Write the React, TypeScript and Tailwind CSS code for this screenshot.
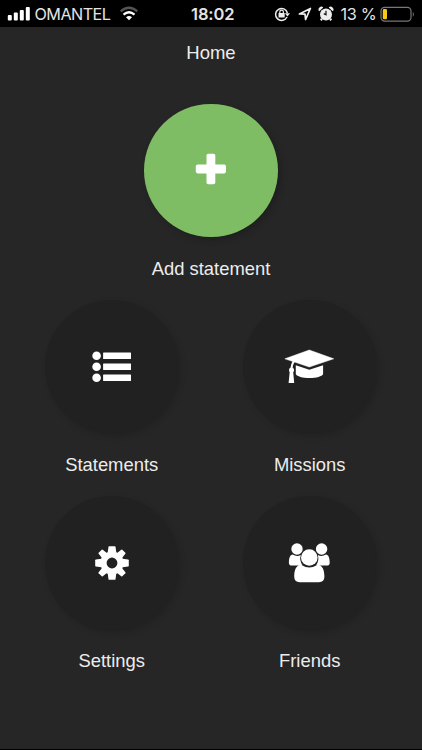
import type { ReactNode } from "react";

const PlusIcon = () => (
  <svg className="size-[60px]" viewBox="-30 -30 60 60" fill="#fff">
    <rect x="-15.2" y="-5.4" width="30.2" height="8.8" rx="1.8" />
    <rect x="-4.5" y="-16.2" width="8.8" height="30.4" rx="1.8" />
  </svg>
);

const ListIcon = () => (
  <svg className="size-[60px]" viewBox="-30 -30 60 60" fill="#fff">
    {[-11.2, -0.2, 10.8].map((y) => (
      <g key={y}>
        <circle cx="-15.4" cy={y} r="4.3" />
        <rect x="-8.900" y={y - 3.2} width="27.9" height="6.4" rx="0.5" />
      </g>
    ))}
  </svg>
);

const CapIcon = () => (
  <svg className="size-[60px]" viewBox="-30 -30 60 60" fill="#fff">
    <path d="M-25.100-8.200L-.700-17L23.700-8.200L-.700 0Z" stroke="#fff" strokeWidth=".500" strokeLinejoin="round" />
    <path d="M-14.200-1.800L-.700 2.800L13.100-1.800V7C12 9.500 6.500 11-.500 11S-13 9.500-14.200 7Z" />
    <path d="M-15.500-6.500C-17.800-4-18.500-1-18.500 3" fill="none" stroke="#fff" strokeWidth="2" />
    <circle cx="-18.500" cy="3" r="2.500" />
    <path d="M-20.200 4L-21.400 16H-15.800L-16.900 4Z" />
  </svg>
);

const GearIcon = () => (
  <svg className="size-[60px]" viewBox="-30 -30 60 60" fill="#fff">
    <circle r="8.500" fill="none" stroke="#fff" strokeWidth="6.200" />
    {[0, 90, 180, 270].map((angle) => (
      <path
        key={angle}
        d="M-4.300-10.500L-3.500-16.200Q-3.400-16.800-2.800-16.800H2.800Q3.400-16.800 3.500-16.200L4.300-10.500Z"
        transform={`rotate(${angle})`}
      />
    ))}
    {[45, 135, 225, 315].map((angle) => (
      <path
        key={angle}
        d="M-3.600-10L-2.900-16Q-2.800-16.700-2.200-16.700H2.200Q2.800-16.700 2.900-16L3.600-10Z"
        transform={`rotate(${angle})`}
      />
    ))}
  </svg>
);

const FriendsIcon = () => (
  <svg className="size-[60px]" viewBox="-30 -30 60 60" fill="#fff">
    <circle cx="-13" cy="-14" r="5.700" />
    <circle cx="11.600" cy="-14" r="5.700" />
    <path d="M-17.400-8.400Q-13-6-9.200-8Q-10.900-2.500-7.600 1.800Q-9.400 2-10.600 2.500H-18.400Q-21.100 2.500-21.100-.3C-21.100-5-19.700-8.300-17.400-8.400Z" />
    <path d="M16-8.400Q11.600-6 7.800-8Q9.500-2.500 6.200 1.800Q8 2 9.200 2.500H17Q19.700 2.500 19.700-.3C19.700-5 18.300-8.300 16-8.400Z" />
    <circle cx="-.700" cy="-5.500" r="8.300" />
    <path d="M-9 1.700Q-.700 7.100 7.600 1.700C12.400 2 14.400 7 14.400 13.500Q14.400 19.200 8.900 19.200H-10.300Q-15.800 19.200-15.800 13.500C-15.800 7-13.800 2-9 1.700Z" />
  </svg>
);

type TileProps = { label: string; icon: ReactNode; accent?: boolean };

const Tile = ({ label, icon, accent }: TileProps) => (
  <button className="flex h-[196.300px] w-[198px] flex-col items-center">
    <span
      className={
        accent
          ? "flex size-[133.500px] items-center justify-center rounded-full bg-[#7fbd64] shadow-[3px_3px_7px_rgba(0,0,0,0.2)]"
          : "flex size-[133.500px] items-center justify-center rounded-full bg-[#212121] shadow-[3px_3px_6px_rgba(0,0,0,0.15)]"
      }
    >
      {icon}
    </span>
    <span className="mt-[20.900px] text-[18.400px] leading-[22px] text-[#ededed]">{label}</span>
  </button>
);

const StatusBar = () => (
  <div className="flex h-[27px] items-center bg-black font-['Inter','Roboto',sans-serif] text-[#e4e4e4]">
    <div className="flex w-[191px] items-center pl-[7px]">
      <svg className="h-[15px] w-[24px]" viewBox="0 0 24 15" fill="#fff">
        <rect x=".800" y="9" width="4" height="5.500" rx="1" />
        <rect x="6.800" y="6.500" width="4" height="8" rx="1" />
        <rect x="12.800" y="4" width="4" height="10.500" rx="1" />
        <rect x="18.800" y="1" width="4" height="13.500" rx="1" />
      </svg>
      <span className="ml-[3.500px] w-[78px] pt-[1px] text-[16.200px] leading-5 tracking-[-0.550px] whitespace-nowrap">OMANTEL</span>
      <svg className="ml-[6px] h-[15px] w-[20px]" viewBox="0 0 20 15" fill="none" strokeWidth="2.300">
        <path d="M1.700 5.400Q10-1.800 18.300 5.400" stroke="#555" />
        <path d="M4.500 8.600Q10 3.800 15.500 8.600" stroke="#fff" />
        <path d="M7 11.300Q10 8.700 13 11.300L10 14.200Z" fill="#fff" />
      </svg>
    </div>
    <span className="w-[44px] pt-[1px] text-[16.500px] leading-5 font-semibold tracking-[-0.100px] whitespace-nowrap">18:02</span>
    <svg className="ml-[39px] h-[16px] w-[16px]" viewBox="0 0 16 16" fill="none" stroke="#eee">
      <path d="M13 11A6 6 0 1 1 13.400 7" strokeWidth="1.500" />
      <path d="M10.800 7.200H16L13.500 10.500Z" fill="#eee" stroke="none" />
      <rect x="4.500" y="7" width="6.200" height="4.500" rx=".600" fill="#eee" stroke="none" />
      <path d="M5.800 7.500V6a1.800 1.800 0 0 1 3.600 0v1.500" strokeWidth="1.200" />
    </svg>
    <svg className="ml-[8px] h-[14px] w-[14px]" viewBox="0 0 14 14" fill="none" stroke="#eee" strokeWidth="1.700" strokeLinejoin="round">
      <path d="M1.400 7L12.400 1.500L7.600 12.500L7 7.200Z" />
    </svg>
    <svg className="ml-[6px] h-[16px] w-[16px]" viewBox="0 0 16 16" fill="#eee">
      <circle cx="8" cy="8.400" r="6" />
      <path d="M1.200 5.300A2.800 2.800 0 0 1 5.300 1.500ZM14.800 5.300A2.800 2.800 0 0 0 10.700 1.500ZM3 12L4.800 13.800L3.500 15L2 13.500ZM13 12L11.200 13.800L12.500 15L14 13.500Z" />
      <path d="M8 4.800V8.700L5.800 7.600" fill="none" stroke="#111" strokeWidth="1.200" />
    </svg>
    <span className="ml-[6.500px] w-[38.500px] pt-[1px] text-[16.300px] leading-5 tracking-[-0.300px] whitespace-nowrap">13 %</span>
    <svg className="ml-[.500px] h-[16px] w-[36px]" viewBox="0 0 36 16">
      <rect x="1" y="1.300" width="30" height="13.800" rx="3.600" fill="none" stroke="#777" strokeWidth="1.200" />
      <rect x="2.800" y="3.100" width="4.200" height="10.200" rx="1.300" fill="#f8c817" />
      <path d="M32.800 5.700Q35 8.200 32.800 10.700Z" fill="#777" />
    </svg>
  </div>
);

export default function App() {
  return (
    <main className="flex h-[750px] w-[422px] flex-col overflow-hidden border-b border-black bg-[#262626] font-['Liberation_Sans',Arial,sans-serif]">
      <StatusBar />
      <h1 className="mt-[15px] text-center text-[18.500px] leading-[22px] text-[#ededed]">Home</h1>
      <div className="mt-[39.500px] flex justify-center">
        <Tile label="Add statement" icon={<PlusIcon />} accent />
      </div>
      <div className="ml-[12.700px] grid w-[396px] grid-cols-2">
        <Tile label="Statements" icon={<ListIcon />} />
        <Tile label="Missions" icon={<CapIcon />} />
        <Tile label="Settings" icon={<GearIcon />} />
        <Tile label="Friends" icon={<FriendsIcon />} />
      </div>
    </main>
  );
}
